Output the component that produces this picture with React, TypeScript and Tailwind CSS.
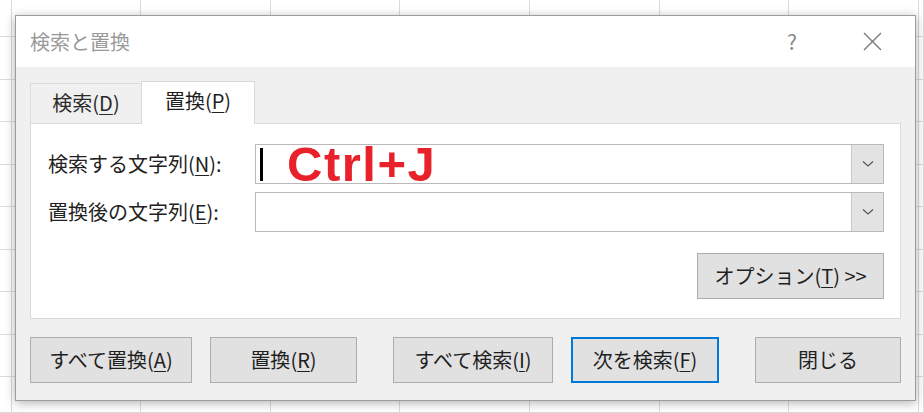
import React from "react";

const COLS = [12, 129, 130, 129, 130, 130, 129, 130, 5];
const ROWS = [37, 43, 42, 43, 42, 43, 42, 43, 42, 36];

function SheetGrid() {
  return (
    <div className="grid grid-cols-[12px_129px_130px_129px_130px_130px_129px_130px_5px] grid-rows-[37px_43px_42px_43px_42px_43px_42px_43px_42px_36px]">
      {ROWS.map((_, r) =>
        COLS.map((_, c) => (
          <div key={`${r}-${c}`} className="border-r border-b border-[#dadada]" />
        ))
      )}
    </div>
  );
}

function Key({ k }: { k: string }) {
  return (
    <>
      (<span className="underline decoration-1 underline-offset-[3px]">{k}</span>)
    </>
  );
}

function Combo({ children }: { children?: React.ReactNode }) {
  return (
    <div className="flex h-[40px] flex-1 items-stretch border border-[#b9b9b9] bg-white">
      <div className="flex flex-1 items-center">{children}</div>
      <div className="flex w-[32px] items-center justify-center border-l border-[#c8c8c8] bg-[#e3e3e3]">
        <svg width="12" height="8" viewBox="0 0 12 8">
          <path d="M1 1.5 L6 6 L11 1.5" fill="none" stroke="#555" strokeWidth="1.2" />
        </svg>
      </div>
    </div>
  );
}

function Btn({
  children,
  w,
  primary,
}: {
  children: React.ReactNode;
  w: string;
  primary?: boolean;
}) {
  return (
    <button
      className={
        "flex h-[46px] items-center justify-center bg-[#e1e1e1] text-[20px] text-[#1f1f1f] " +
        w +
        (primary ? " border-2 border-[#0078d7]" : " border border-[#adadad]")
      }
    >
      {children}
    </button>
  );
}

export default function App() {
  return (
    <div className="relative h-[413px] w-[924px] overflow-hidden bg-white font-['Noto_Sans_CJK_JP',sans-serif]">
      <SheetGrid />

      {/* dialog over the sheet */}
      <div className="absolute left-[15px] top-[15px] flex h-[386px] w-[901px] flex-col border border-[#9c9c9c] bg-[#f0f0f0] shadow-[0_2px_10px_rgba(0,0,0,0.3)]">
        <div className="flex h-[51px] items-center bg-white pl-[14px] pr-[33px]">
          <span className="flex-1 text-[20px] text-[#9a9a9a]">検索と置換</span>
          <span className="mr-[66px] text-[21px] text-[#8a8a8a]">?</span>
          <svg width="19" height="19" viewBox="0 0 19 19">
            <path d="M1 1 L18 18 M18 1 L1 18" stroke="#7a7a7a" strokeWidth="1.4" />
          </svg>
        </div>

        <div className="flex flex-1 flex-col px-[14px] pt-[14px]">
          <div className="flex h-[42px] items-end">
            <div className="flex h-[40px] w-[111px] items-center justify-center border-t border-l border-[#dcdcdc] pb-[2px] text-[20px] text-[#2a2a2a]">
              検索<Key k="D" />
            </div>
            <div className="relative -mb-px flex h-[43px] w-[114px] items-center justify-center border-x border-t border-[#d9d9d9] bg-white pb-[4px] text-[20px] text-[#1f1f1f]">
              置換<Key k="P" />
            </div>
          </div>

          <div className="flex h-[196px] flex-col border border-[#d9d9d9] bg-white pl-[17px] pr-[16px] pt-[20px]">
            <div className="flex items-center">
              <span className="w-[207px] text-[20px] text-[#222]">
                検索する文字列<Key k="N" />:
              </span>
              <Combo>
                <span className="ml-[4px] h-[33px] w-[3px] bg-black" />
                <span className="ml-[24px] font-['Liberation_Sans',sans-serif] text-[49px] font-bold leading-none tracking-[1.5px] text-[#e8212b]">
                  Ctrl+J
                </span>
              </Combo>
            </div>
            <div className="mt-[8px] flex items-center">
              <span className="w-[207px] text-[20px] text-[#222]">
                置換後の文字列<Key k="E" />:
              </span>
              <Combo />
            </div>
            <div className="mt-[21px] flex justify-end">
              <Btn w="w-[187px]">
                オプション<Key k="T" />&nbsp;&gt;&gt;
              </Btn>
            </div>
          </div>

          <div className="mt-[18px] flex">
            <Btn w="w-[165px]">
              すべて置換<Key k="A" />
            </Btn>
            <div className="ml-[18px]">
              <Btn w="w-[147px]">
                置換<Key k="R" />
              </Btn>
            </div>
            <div className="ml-[36px]">
              <Btn w="w-[160px]">
                すべて検索<Key k="I" />
              </Btn>
            </div>
            <div className="ml-[18px]">
              <Btn w="w-[148px]" primary>
                次を検索<Key k="F" />
              </Btn>
            </div>
            <div className="ml-[36px]">
              <Btn w="w-[146px]">閉じる</Btn>
            </div>
          </div>
        </div>
      </div>
    </div>
  );
}
